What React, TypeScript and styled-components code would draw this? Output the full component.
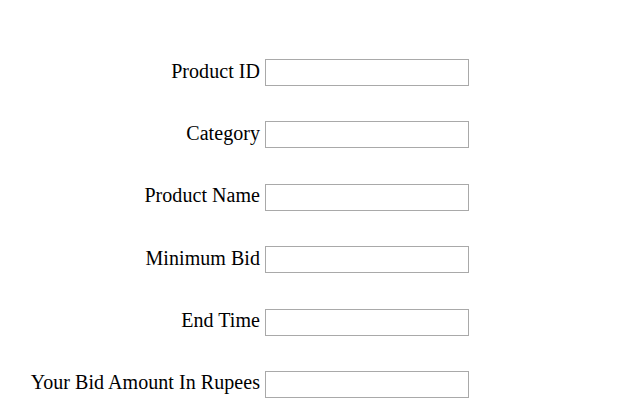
import React from "react";
import styled, { createGlobalStyle } from "styled-components";

const Global = createGlobalStyle`
  html, body { margin: 0; padding: 0; background: #ffffff; }
  body { font-family: "Liberation Serif", "Times New Roman", serif; color: #000; }
`;

const Page = styled.div`
  width: 619px;
  height: 416px;
  box-sizing: border-box;
  padding: 59px 0 0 0;
`;

const Form = styled.form`
  display: grid;
  grid-template-columns: 260px 204px;
  grid-auto-rows: 27px;
  row-gap: 35.4px;
  column-gap: 5px;
  align-items: center;
`;

const Label = styled.label`
  font-size: 20px;
  letter-spacing: 0.05px;
  text-align: right;
  white-space: nowrap;
  line-height: 27px;
  margin-top: -3px;
`;

const Field = styled.input`
  box-sizing: border-box;
  width: 204px;
  height: 27px;
  border: 1px solid #a9a9a9;
  padding: 0 4px;
  font-family: inherit;
  font-size: 16px;
  outline: none;
  background: #fff;
`;

const fields = [
  "Product ID",
  "Category",
  "Product Name",
  "Minimum Bid",
  "End Time",
  "Your Bid Amount In Rupees",
];

export default function App() {
  return (
    <Page>
      <Global />
      <Form>
        {fields.map((f) => (
          <React.Fragment key={f}>
            <Label>{f}</Label>
            <Field type="text" aria-label={f} />
          </React.Fragment>
        ))}
      </Form>
    </Page>
  );
}
